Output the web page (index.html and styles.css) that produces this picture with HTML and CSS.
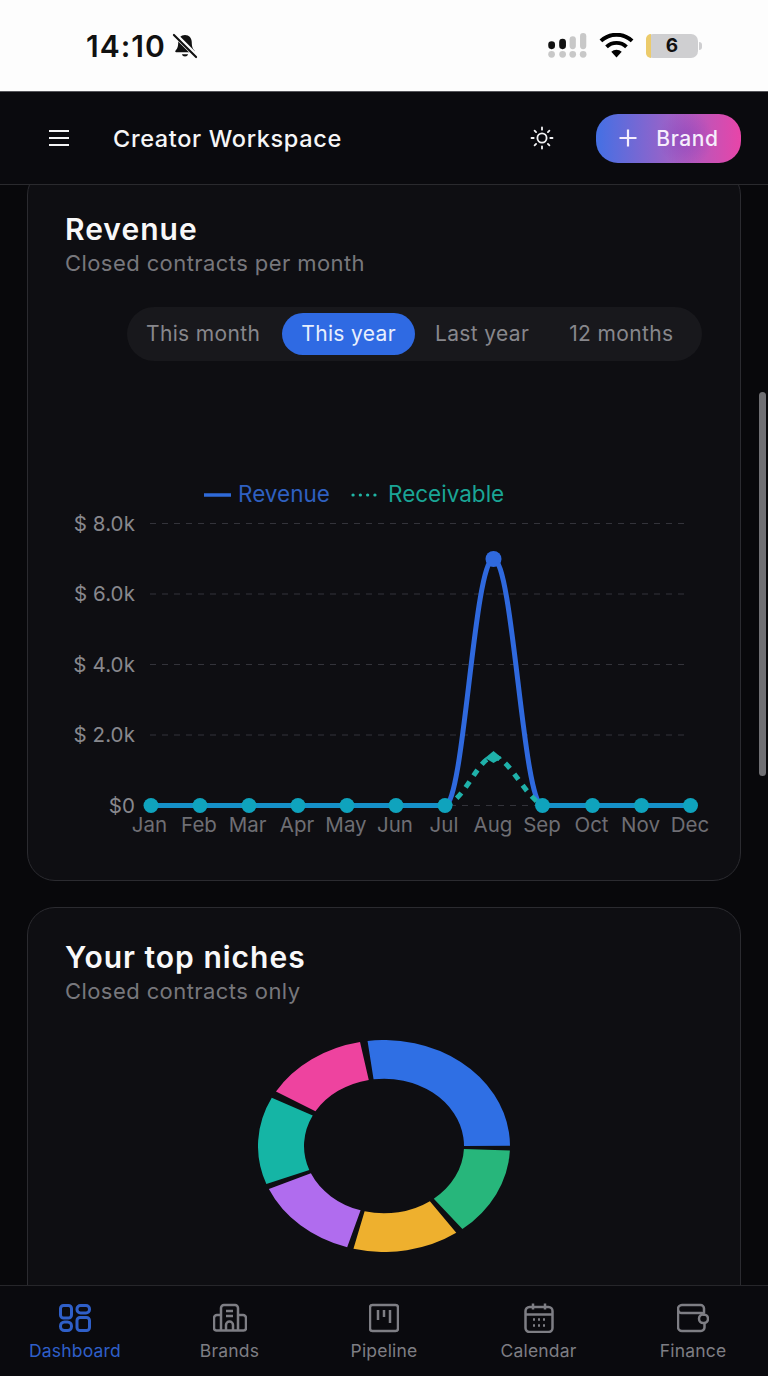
FILE: index.html
```html
<!DOCTYPE html>
<html lang="en">
<head>
<meta charset="utf-8">
<title>Creator Workspace</title>
<link rel="stylesheet" href="styles.css">
</head>
<body>
<div class="phone">
  <div class="status">
    <div class="status-left">
      <span class="clock">14:10</span>
      <svg class="bell" viewBox="0 0 24 24" width="28" height="28"><path d="M12 2.500c-3.600 0-5.800 2.700-5.800 6.300 0 4-.9 5.600-2.400 7.300-.4.500-.1 1.200.6 1.200h15.200c.7 0 1-.7.6-1.200-1.500-1.700-2.400-3.300-2.400-7.300 0-3.600-2.200-6.300-5.800-6.300z" fill="#111"/><path d="M9.300 19a2.800 2.600 0 0 0 5.400 0z" fill="#111"/><path d="M2.500 1.500 22 21" stroke="#fdfdfd" stroke-width="4.200"/><path d="M2.500 2.500 21.500 21.500" stroke="#111" stroke-width="1.800" stroke-linecap="round"/></svg>
    </div>
    <div class="status-right">
      <svg class="signal" viewBox="0 0 38 24" width="40" height="25"><g fill="#111"><rect x="1" y="8" width="6.500" height="7.500" rx="3.200"/><rect x="11.500" y="5.500" width="6.500" height="10" rx="3.200"/></g><g fill="#c8c8c8"><rect x="21.500" y="3" width="6" height="12.500" rx="3"/><rect x="31.500" y="0" width="6" height="15.500" rx="3"/><circle cx="4.200" cy="20.500" r="3.200"/><circle cx="14.800" cy="20.500" r="3.200"/><circle cx="24.500" cy="20.500" r="3.200"/><circle cx="34.500" cy="20.500" r="3.200"/></g></svg>
      <svg class="wifi" viewBox="0 0 34 24" width="37" height="26"><path d="M17 22.500 12.200 17.300a7 7 0 0 1 9.600 0z" fill="#000"/><path d="M7.800 12.800a13.400 13.400 0 0 1 18.400 0" fill="none" stroke="#000" stroke-width="3.600"/><path d="M2.600 7.300a21 21 0 0 1 28.800 0" fill="none" stroke="#000" stroke-width="3.600"/></svg>
      <div class="battery"><span class="battery-fill"></span><span class="battery-num">6</span><span class="battery-tip"></span></div>
    </div>
  </div>

  <header class="topbar">
    <div class="topbar-left">
      <svg class="menu-icon" viewBox="0 0 22 18" width="22" height="18"><path d="M1 2h20M1 9h20M1 16h20" stroke="#f4f4f5" stroke-width="2" fill="none"/></svg>
      <h1 class="workspace">Creator Workspace</h1>
    </div>
    <div class="topbar-right">
      <svg class="sun" viewBox="0 0 26 26" width="26" height="26" fill="none" stroke="#f4f4f5" stroke-width="1.800" stroke-linecap="round"><circle cx="13" cy="13" r="4.600"/><path d="M13 2.500v2.200M13 21.300v2.200M2.500 13h2.200M21.300 13h2.200M5.600 5.600l1.500 1.500M18.900 18.900l1.500 1.500M5.600 20.400l1.500-1.500M18.900 7.100l1.500-1.500"/></svg>
      <button class="add-brand"><svg viewBox="0 0 20 20" width="20" height="20"><path d="M10 1.500v17M1.500 10h17" stroke="#f6eefc" stroke-width="2.200" fill="none"/></svg><span>Brand</span></button>
    </div>
  </header>

  <main class="content">
    <section class="card card-revenue">
      <h2 class="card-title">Revenue</h2>
      <p class="card-sub">Closed contracts per month</p>
      <div class="tabs">
        <span class="tab">This month</span>
        <span class="tab tab-active">This year</span>
        <span class="tab">Last year</span>
        <span class="tab">12 months</span>
      </div>
      <svg class="chart" viewBox="0 0 714 500" width="714" height="500">
        <g class="legend">
          <path d="M176 131h27" stroke="#2f6ad9" stroke-width="3.500"/>
          <text x="210" y="138" class="leg-rev">Revenue</text>
          <path d="M325 131h26" stroke="#20b5a5" stroke-width="3.200" stroke-dasharray="0.1 7.200" stroke-linecap="round"/>
          <text x="360" y="138" class="leg-rec">Receivable</text>
        </g>
        <g class="grid">
          <path d="M122 159.500h536M122 230h536M122 300.500h536M122 371h536M122 441.500h536"/>
        </g>
        <g class="ylabels">
          <text x="107" y="166.500">$ 8.0k</text>
          <text x="107" y="237">$ 6.0k</text>
          <text x="107" y="307.500">$ 4.0k</text>
          <text x="107" y="378">$ 2.0k</text>
          <text x="107" y="448.500">$0</text>
        </g>
        <g class="xlabels">
          <text x="121.500" y="468">Jan</text><text x="171" y="468">Feb</text><text x="219.500" y="468">Mar</text><text x="269" y="468">Apr</text><text x="318" y="468">May</text><text x="367" y="468">Jun</text><text x="416" y="468">Jul</text><text x="465" y="468">Aug</text><text x="514" y="468">Sep</text><text x="563.500" y="468">Oct</text><text x="612.500" y="468">Nov</text><text x="662" y="468">Dec</text>
        </g>
        <path d="M123 441.500H417C436 441.500 446 195 465.500 195C485 195 495 441.500 514.500 441.500H663" fill="none" stroke="#2f69de" stroke-width="5"/>
        <path d="M417 441.500C437 437 450 393 465.500 393C481 393 495 430 514.500 441.500" fill="none" stroke="#1fb1aa" stroke-width="5" stroke-dasharray="7 7"/>
        <path d="M123 441.500H417M514.500 441.500H663" fill="none" stroke="#1590c8" stroke-width="5"/>
        <circle cx="465.500" cy="195" r="8" fill="#2f69de"/>
        <path d="M465.500 387 474 394 465.500 399 457 394z" fill="#1fb1aa"/>
        <g fill="#0fa3bd">
          <circle cx="123" cy="441.500" r="7.500"/><circle cx="172" cy="441.500" r="7.500"/><circle cx="221" cy="441.500" r="7.500"/><circle cx="270" cy="441.500" r="7.500"/><circle cx="319" cy="441.500" r="7.500"/><circle cx="368" cy="441.500" r="7.500"/><circle cx="417" cy="441.500" r="7.500"/><circle cx="514.500" cy="441.500" r="7.500"/><circle cx="564.500" cy="441.500" r="7.500"/><circle cx="613.500" cy="441.500" r="7.500"/><circle cx="662.500" cy="441.500" r="7.500"/>
        </g>
      </svg>
    </section>

    <section class="card card-niches">
      <h2 class="card-title">Your top niches</h2>
      <p class="card-sub">Closed contracts only</p>
      <svg class="donut" viewBox="-126 -126 252 252" width="252" height="212" preserveAspectRatio="none">
        <g fill="none" stroke-width="46" transform="rotate(-90)">
          <circle r="103" pathLength="360" stroke="#2f6fe4" stroke-dasharray="97.500 360" transform="rotate(-7.500)"/>
          <circle r="103" pathLength="360" stroke="#27b67b" stroke-dasharray="49 360" transform="rotate(92.500)"/>
          <circle r="103" pathLength="360" stroke="#eeb02e" stroke-dasharray="49 360" transform="rotate(145)"/>
          <circle r="103" pathLength="360" stroke="#b06cee" stroke-dasharray="49 360" transform="rotate(197)"/>
          <circle r="103" pathLength="360" stroke="#15b5a5" stroke-dasharray="48 360" transform="rotate(249)"/>
          <circle r="103" pathLength="360" stroke="#ee439f" stroke-dasharray="48 360" transform="rotate(301)"/>
        </g>
      </svg>
    </section>
  </main>

  <div class="scrollbar"></div>

  <nav class="bottom-nav">
    <a class="nav-item nav-active">
      <svg viewBox="0 0 32 28" width="32" height="28" fill="none" stroke="currentColor" stroke-width="3"><rect x="1.500" y="1.500" width="11" height="12.500" rx="3"/><rect x="18" y="1.500" width="12.500" height="7.500" rx="3.500"/><rect x="1.500" y="18" width="11" height="8.500" rx="4"/><rect x="18" y="13.500" width="12.500" height="13" rx="3"/></svg>
      <span>Dashboard</span>
    </a>
    <a class="nav-item">
      <svg viewBox="0 0 34 28" width="34" height="28" fill="none" stroke="currentColor" stroke-width="2.500" stroke-linejoin="round"><path d="M8 26.500V4a3 3 0 0 1 3-3h11a3 3 0 0 1 3 3v22.500"/><path d="M8 11H4a3 3 0 0 0-3 3v10a2.500 2.500 0 0 0 2.500 2.500h27A2.500 2.500 0 0 0 33 24V14a3 3 0 0 0-3-3h-5"/><path d="M13 7h7M13 12h7M13 26.500V21a3.500 3.500 0 0 1 7 0v5.500"/></svg>
      <span>Brands</span>
    </a>
    <a class="nav-item">
      <svg viewBox="0 0 30 28" width="30" height="28" fill="none" stroke="currentColor" stroke-width="2.500"><rect x="1" y="1" width="28" height="26" rx="2.500"/><path d="M9 6v10M15 6v7M21 6v13"/></svg>
      <span>Pipeline</span>
    </a>
    <a class="nav-item">
      <svg viewBox="0 0 30 30" width="30" height="30" fill="none" stroke="currentColor" stroke-width="2.500"><rect x="1.500" y="4" width="27" height="25" rx="4"/><path d="M1.500 11.500h27M9 .5v6M21 .5v6"/><path d="M9 16.500h2M14 16.500h2M19 16.500h2M9 22.500h2M14 22.500h2M19 22.500h2" stroke-width="2.400"/></svg>
      <span>Calendar</span>
    </a>
    <a class="nav-item">
      <svg viewBox="0 0 32 28" width="32" height="28" fill="none" stroke="currentColor" stroke-width="2.500"><path d="M27 9V4.500A3.500 3.500 0 0 0 23.500 1H5A4 4 0 0 0 1 5v18a4 4 0 0 0 4 4h19a3.500 3.500 0 0 0 3.500-3.500V19"/><path d="M1 5.500A3.500 3.500 0 0 0 5 9h19.500A3 3 0 0 1 27.500 12"/><rect x="22" y="10.500" width="9" height="8.500" rx="4.200"/></svg>
      <span>Finance</span>
    </a>
  </nav>
</div>
</body>
</html>
```

FILE: styles.css
```css
* { box-sizing: border-box; }
html, body { margin: 0; padding: 0; }
body { font-family: Inter, "Liberation Sans", sans-serif; background: #08080b; }

.phone {
  position: relative;
  width: 768px;
  height: 1376px;
  overflow: hidden;
  display: flex;
  flex-direction: column;
  background: #08080b;
}

.status {
  height: 92px;
  flex: none;
  background: #fdfdfd;
  display: flex;
  justify-content: space-between;
  align-items: center;
  padding: 0 70px 0 86px;
  border-bottom: 1px solid #55555a;
}
.status-left { display: flex; align-items: center; gap: 5px; }
.clock { font-size: 30px; font-weight: 600; color: #111; letter-spacing: 1px; }
.status-right { display: flex; align-items: center; gap: 11px; }
.battery {
  position: relative;
  width: 52px;
  height: 24px;
  border-radius: 7px;
  background: #cfcfd1;
  display: flex;
  align-items: center;
  justify-content: center;
}
.battery-fill {
  position: absolute;
  left: 0; top: 0; bottom: 0;
  width: 5px;
  background: #eccb6b;
  border-radius: 7px 0 0 7px;
}
.battery-num { font-size: 19px; font-weight: 700; color: #111; }
.battery-tip {
  position: absolute;
  right: -4px;
  top: 8px;
  width: 3px;
  height: 8px;
  border-radius: 0 3px 3px 0;
  background: #cfcfd1;
}

.topbar {
  height: 93px;
  flex: none;
  background: #0a0a0e;
  border-bottom: 1px solid #2a2a2e;
  display: flex;
  justify-content: space-between;
  align-items: center;
  padding: 0 27px 0 48px;
}
.topbar-left { display: flex; align-items: center; gap: 43px; }
.workspace { margin: 0; font-size: 23.500px; font-weight: 500; color: #f6f6f7; letter-spacing: 0.65px; }
.topbar-right { display: flex; align-items: center; gap: 41px; }
.add-brand {
  width: 145px;
  height: 49px;
  border: 0;
  border-radius: 22px;
  background:
    radial-gradient(circle at 62% 50%, rgba(125, 60, 185, 0.45), rgba(125, 60, 185, 0) 30%),
    linear-gradient(90deg, #4470e4 0%, #9a62c8 50%, #e845a8 100%);
  color: #f6eefc;
  font: 500 21px Inter, "Liberation Sans", sans-serif;
  letter-spacing: 0.6px;
  display: flex;
  align-items: center;
  justify-content: center;
  gap: 18px;
  padding: 0;
}

.content { flex: 1; min-height: 0; overflow: hidden; padding: 0 27px; }
.card {
  background: #0e0e12;
  border: 1px solid #2b2b30;
  border-radius: 28px;
  padding: 0 37px;
}
.card-revenue { height: 714px; margin-top: -18px; padding-top: 44px; }
.card-niches { height: 500px; margin-top: 26px; padding-top: 32px; }
.card-title { margin: 0; font-size: 30px; line-height: 34px; font-weight: 600; color: #f8f8f9; letter-spacing: 1px; }
.card-sub { margin: 4px 0 0; font-size: 22px; line-height: 26px; color: #77777c; letter-spacing: 0.42px; }

.tabs {
  display: flex;
  align-items: center;
  gap: 9px;
  width: 575px;
  height: 54px;
  margin: 31px 0 0 62px;
  padding: 0 6px;
  border-radius: 27px;
  background: #18181c;
}
.tab { padding: 0 13px; font-size: 21px; letter-spacing: 0.35px; color: #87878c; height: 42px; line-height: 42px; white-space: nowrap; }
.tab-active { background: #2f6ae3; color: #e8effd; border-radius: 21px; padding: 0 19px; margin-right: -2px; }
.tab:last-child { margin-left: 5px; }

.chart { display: block; margin: 3px 0 0 -37px; overflow: visible; }
.grid path { stroke: #33333a; stroke-width: 1.200; stroke-dasharray: 6 6; fill: none; }
.ylabels text { fill: #88888d; font-size: 20.500px; text-anchor: end; letter-spacing: 0.1px; }
.xlabels text { fill: #6e6e74; font-size: 20.500px; text-anchor: middle; }
.legend text { font-size: 22.500px; }
.leg-rev { fill: #2f60c0; }
.leg-rec { fill: #1aa596; }

.donut { display: block; margin: 36px auto 0; }

.scrollbar {
  position: absolute;
  left: 759px;
  top: 392px;
  width: 7px;
  height: 384px;
  border-radius: 4px;
  background: #6f6f73;
}

.bottom-nav {
  position: absolute;
  left: 0;
  right: 0;
  bottom: 0;
  height: 91px;
  background: #0a0a0e;
  border-top: 1px solid #26262a;
  display: grid;
  grid-template-columns: repeat(5, 154.500px);
  justify-content: center;
}
.nav-item {
  display: flex;
  flex-direction: column;
  align-items: center;
  justify-content: flex-start;
  color: #7e7e84;
  padding-top: 17px;
  height: 100%;
}
.nav-item svg { height: 30px; }
.nav-item span { font-size: 17.500px; line-height: 20px; margin-top: 8px; letter-spacing: 0.2px; }
.nav-active { color: #2f5fc8; }
```
